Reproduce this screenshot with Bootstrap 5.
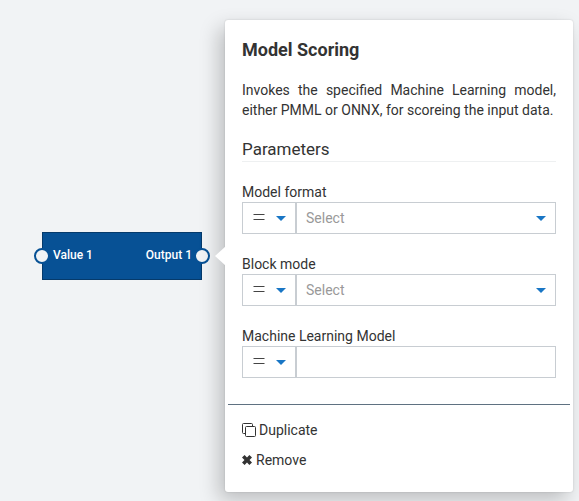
<!DOCTYPE html>
<html lang="en">
<head>
<meta charset="utf-8">
<meta name="viewport" content="width=device-width, initial-scale=1">
<title>Model Scoring</title>
<link rel="stylesheet" href="https://cdn.jsdelivr.net/npm/bootstrap@5.3.0/dist/css/bootstrap.min.css">
<style>
body{font-family:Roboto,sans-serif;font-size:14px;line-height:20px;color:#333;background:#f1f3f5;height:501px}
.flow-node{position:absolute;left:42px;top:232px;width:160px;height:48px;background:#075195;border:1px solid #053a6b;color:#fff;font-size:12px;font-weight:500;padding:0 9px 3px 10px}
.port{position:absolute;top:15px;width:16px;height:16px;border:2px solid #075195;border-radius:50%;background:#f1f3f5}
.port-in{left:-9px}
.port-out{right:-9px}
.panel{position:absolute;left:225px;top:20px;width:348px;height:472px;background:#fff;border-radius:3px;padding:18px 17px 0;box-shadow:-6px 8px 20px rgba(0,0,0,.22),0 0 2px rgba(0,0,0,.16)}
.pointer{position:absolute;left:-10px;top:226px;width:11px;height:20px;background:#fff;clip-path:polygon(0 50%,100% 0,100% 100%)}
.panel h1{font-size:18px;line-height:24px;font-weight:700;margin:0 0 18px}
.desc{text-align:justify;margin:0 0 18px}
.panel h2{font-size:17px;line-height:22px;height:24px;font-weight:400;margin:0 0 20px;border-bottom:1px solid #eef0f1}
.field{margin-bottom:20px}
.field label{display:block;line-height:20px}
.ctl{height:32px;border:1px solid #c8cdd2}
.op{width:53px;padding:0 9px 0 10px;border-right:1px solid #c8cdd2}
.val{border-left:1px solid #c8cdd2;color:#999;padding:0 9px}
.panel svg{display:block;flex:none}
.rule{height:1px;background:#5f7181;margin:26px -14px 15px}
.act{height:20px;margin-bottom:10px}
.dup-icon{margin-right:3px}
</style>
</head>
<body class="position-relative overflow-hidden">
<div class="flow-node d-flex align-items-center justify-content-between">
  <span class="port port-in"></span><span>Value 1</span><span>Output 1</span><span class="port port-out"></span>
</div>
<section class="panel">
  <span class="pointer"></span>
  <h1>Model Scoring</h1>
  <p class="desc">Invokes the specified Machine Learning model, either PMML or ONNX, for scoreing the input data.</p>
  <h2>Parameters</h2>
  <div class="field">
    <label>Model format</label>
    <div class="ctl d-flex">
      <div class="op d-flex align-items-center justify-content-between">
        <svg width="12" height="8"><path d="M.5 .5h11M.5 5.5h11" stroke="#444" stroke-width="1.2"/></svg>
        <svg width="10" height="6"><path d="M0 1h10L5 6z" fill="#1976c5"/></svg>
      </div>
      <div class="val flex-grow-1 d-flex align-items-center justify-content-between"><span>Select</span><svg width="10" height="6"><path d="M0 1h10L5 6z" fill="#1976c5"/></svg></div>
    </div>
  </div>
  <div class="field">
    <label>Block mode</label>
    <div class="ctl d-flex">
      <div class="op d-flex align-items-center justify-content-between">
        <svg width="12" height="8"><path d="M.5 .5h11M.5 5.5h11" stroke="#444" stroke-width="1.2"/></svg>
        <svg width="10" height="6"><path d="M0 1h10L5 6z" fill="#1976c5"/></svg>
      </div>
      <div class="val flex-grow-1 d-flex align-items-center justify-content-between"><span>Select</span><svg width="10" height="6"><path d="M0 1h10L5 6z" fill="#1976c5"/></svg></div>
    </div>
  </div>
  <div class="field mb-0">
    <label>Machine Learning Model</label>
    <div class="ctl d-flex">
      <div class="op d-flex align-items-center justify-content-between">
        <svg width="12" height="8"><path d="M.5 .5h11M.5 5.5h11" stroke="#444" stroke-width="1.2"/></svg>
        <svg width="10" height="6"><path d="M0 1h10L5 6z" fill="#1976c5"/></svg>
      </div>
      <div class="val flex-grow-1"></div>
    </div>
  </div>
  <div class="rule"></div>
  <div class="act d-flex align-items-center"><svg class="dup-icon" width="14" height="14" fill="none" stroke="#333"><path d="M3.5 10.5h-2a1 1 0 0 1-1-1v-8a1 1 0 0 1 1-1h8a1 1 0 0 1 1 1v2"/><rect x="3.5" y="3.5" width="10" height="10" rx="1"/></svg><span>Duplicate</span></div>
  <div class="act d-flex align-items-center"><svg class="me-1" width="10" height="10"><path d="M2.6 0 5 2.5 7.4 0 10 2.5 7.5 5 10 7.5 7.4 10 5 7.5 2.6 10 0 7.5 2.5 5 0 2.5z" fill="#333"/></svg><span>Remove</span></div>
</section>
<script src="https://cdn.jsdelivr.net/npm/bootstrap@5.3.0/dist/js/bootstrap.bundle.min.js"></script>
</body>
</html>
